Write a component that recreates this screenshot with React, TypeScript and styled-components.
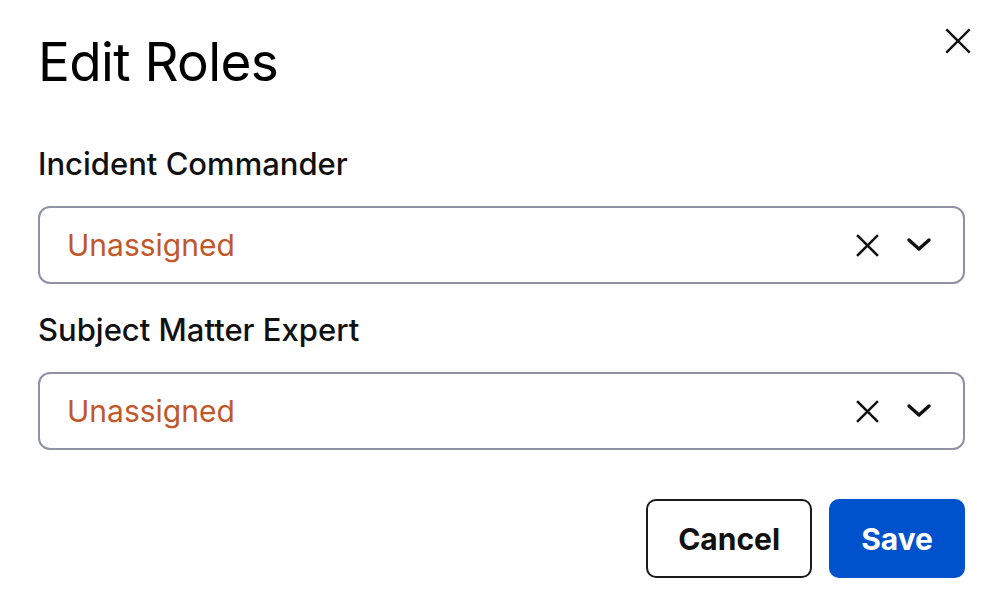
import styled, { createGlobalStyle } from "styled-components";

const GlobalStyle = createGlobalStyle`
    body {
        margin: 0;
        background: #ffffff;
        font-family: Inter, "Liberation Sans", Arial, sans-serif;
        color: #000000;
    }
`

const CloseIcon = ({size = 24, stroke = 2.5}: {size?: number; stroke?: number}) => (
    <svg width={size} height={size} viewBox="0 0 24 24" fill="none" stroke="currentColor"
         strokeWidth={stroke} strokeLinecap="square">
        <line x1="2" y1="2" x2="22" y2="22"/>
        <line x1="22" y1="2" x2="2" y2="22"/>
    </svg>
);

const ChevronIcon = () => (
    <svg width="26" height="16" viewBox="0 0 26 16" fill="none" stroke="currentColor"
         strokeWidth="3.4" strokeLinecap="round" strokeLinejoin="round">
        <polyline points="3,3 13,12 23,3"/>
    </svg>
);

const RoleSelect = ({label}: {label: string}) => (
    <Field>
        <Label>{label}</Label>
        <SelectBox>
            <Placeholder>Unassigned</Placeholder>
            <Indicators>
                <IconButton><CloseIcon size={23} stroke={2.6}/></IconButton>
                <IconButton><ChevronIcon/></IconButton>
            </Indicators>
        </SelectBox>
    </Field>
);

export default function App() {
    return (
        <>
            <GlobalStyle/>
            <Dialog>
                <Header>
                    <Title>Edit Roles</Title>
                    <DismissButton><CloseIcon size={26} stroke={2.2}/></DismissButton>
                </Header>
                <Fields>
                    <RoleSelect label="Incident Commander"/>
                    <RoleSelect label="Subject Matter Expert"/>
                </Fields>
                <Footer>
                    <Button>Cancel</Button>
                    <Button $primary>Save</Button>
                </Footer>
            </Dialog>
        </>
    );
}

const Dialog = styled.div`
    padding: 36px 23px 0 38px;
    display: flex;
    flex-direction: column;
`
const Header = styled.div`
    display: flex;
    justify-content: space-between;
    align-items: flex-start;
`
const Title = styled.h1`
    margin: 0;
    font-size: 53px;
    line-height: 1;
    font-weight: 400;
    letter-spacing: -0.6px;
`
const DismissButton = styled.button`
    border: none;
    background: none;
    padding: 0;
    margin: -8px -6px 0 0;
    color: #111;
    display: flex;
    cursor: pointer;
`
const Fields = styled.div`
    margin-top: 56px;
    display: flex;
    flex-direction: column;
    gap: 27px;
`
const Field = styled.div`
    display: flex;
    flex-direction: column;
    gap: 24px;
`
const Label = styled.label`
    font-size: 31px;
    line-height: 1.2;
    font-weight: 500;
    color: #111;
`
const SelectBox = styled.div`
    box-sizing: border-box;
    height: 78px;
    border: 2px solid #9090a6;
    border-radius: 12px;
    display: flex;
    align-items: center;
    justify-content: space-between;
    padding: 0 31px 0 27px;
`
const Placeholder = styled.span`
    font-size: 30px;
    color: #c0582a;
`
const Indicators = styled.div`
    display: flex;
    align-items: center;
    gap: 27px;
    color: #111;
`
const IconButton = styled.span`
    display: flex;
    align-items: center;
`
const Footer = styled.div`
    margin-top: 49px;
    display: flex;
    justify-content: flex-end;
    gap: 17px;
`
const Button = styled.button<{$primary?: boolean}>`
    box-sizing: border-box;
    height: 79px;
    padding: 0 30px;
    border-radius: 10px;
    font-family: Inter, "Liberation Sans", Arial, sans-serif;
    font-size: 30px;
    font-weight: 700;
    border: 2px solid ${p => p.$primary ? "#0052cc" : "#1a1a1a"};
    background: ${p => p.$primary ? "#0052cc" : "#ffffff"};
    color: ${p => p.$primary ? "#ffffff" : "#111111"};
    cursor: pointer;
`
